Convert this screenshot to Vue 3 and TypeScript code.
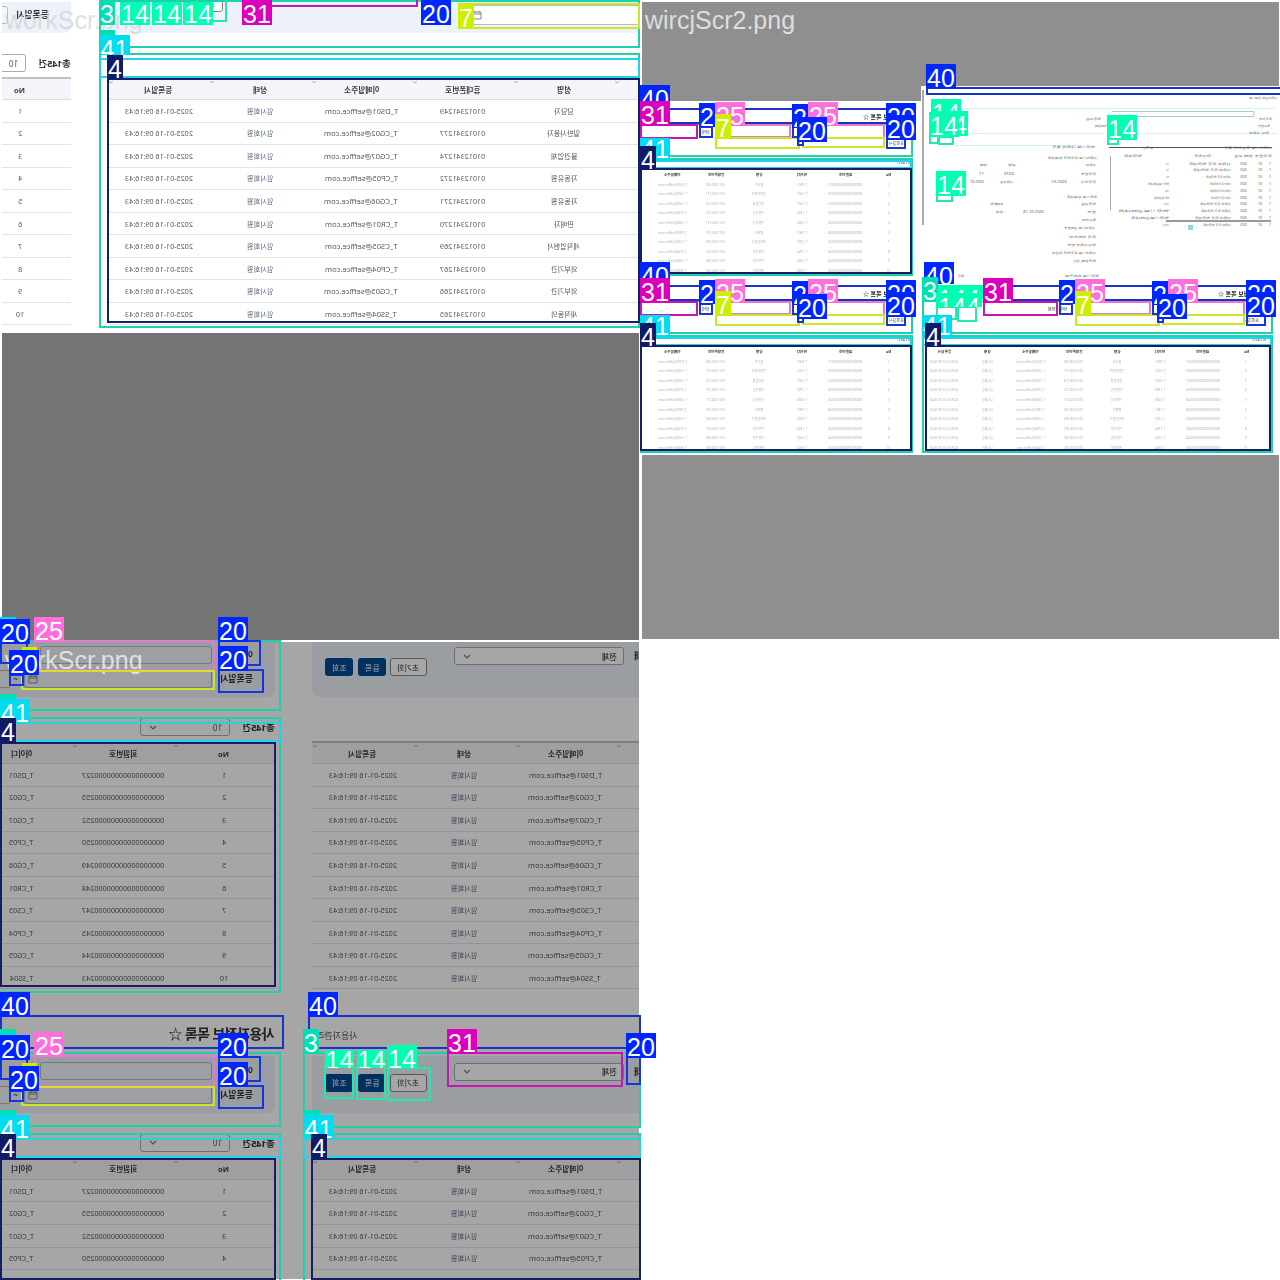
<script setup lang="ts">
interface Row { id: string; no: string; phone: string; name: string }
interface Mark { k: number; x: number; y: number; r: number; b: number }
interface Tag { k: number; x: number; y: number; w?: number; h?: number; t?: string; dy?: number }

const rows: Row[] = [
  ['DS01', '227', '249', '담당자'], ['CG02', '255', '277', '일반사용자'],
  ['CG07', '252', '274', '물건업체'], ['CP05', '250', '272', '자동유원'],
  ['CG06', '249', '271', '자동유원'], ['CR01', '248', '270', '판매자'],
  ['CS05', '247', '269', '세직업현서'], ['CP04', '245', '267', '외부기관'],
  ['CG05', '244', '266', '외부기관'], ['SS04', '243', '265', '새직동의'],
].map(([id, no, phone, name]) => ({ id, no, phone, name }))

const heads: Record<string, string> = {
  no: 'No', member: '회원번호', id: '아이디', date: '등록일시',
  state: '상태', mail: '이메일주소', phone: '휴대폰번호', name: '성명', rest: '',
}
function cell(key: string, r: Row, i: number): string {
  switch (key) {
    case 'no': return String(i + 1)
    case 'member': return '00000000000000000' + r.no
    case 'id': return 'T_' + r.id
    case 'date': return '2025-01-16 09:16:43'
    case 'state': return '임시회원'
    case 'mail': return `T_${r.id}@seffice.com`
    case 'phone': return '01012341' + r.phone
    case 'name': return r.name
    default: return ''
  }
}
const left = ['id', 'member', 'no']
const right = ['date', 'state', 'mail', 'phone', 'name', 'rest']
const pages = [
  { cls: 'light', bands: [{ title: false }] },
  { cls: 'dark', bands: [{ title: false }, { title: true }] },
]

const thumbHeads = ['이메일주소', '휴대폰번호', '성명', '아이디', '회원번호', 'No']
const wideHeads = ['등록일시', '상태', ...thumbHeads]
function thumbCell(head: string, r: Row, i: number): string {
  const key = Object.keys(heads).find(k => heads[k] === head) ?? 'rest'
  return cell(key, r, i)
}

const marks: Mark[] = []
const tags: Tag[] = []
const box = (k: number, x: number, y: number, r: number, b: number) => marks.push({ k, x, y, r, b })
const tag = (k: number, x: number, y: number, w?: number, h?: number, t?: string, dy?: number) =>
  tags.push({ k, x, y, w, h, t, dy })

// upper left page
box(3, 99, 0, 640, 48); box(14, 196, -10, 227, 22); box(31, 242, -10, 418, 7)
box(7, 458, 3, 640, 29); box(3, 99, 53, 640, 328); box(41, 99, 58, 640, 78); box(4, 107, 78, 640, 323)
tag(3, 99, 30, 16, 10, ''); tag(3, 99, 2, 16, 23, '3', -2)
for (const x of [120, 152, 183]) tag(14, x, 2, 30, 23, '14', -2)
tag(31, 242, 0); tag(20, 421, 0); tag(7, 458, 4, 16); tag(41, 99, 35, 31, 20); tag(4, 107, 55, 16, 24)

// lower left page, two repeats of the form
for (const d of [0, 416]) {
  box(3, -2, d ? 1052 : 640, 281, 711 + d)
  box(25, 34, (d ? 639 : 640) + d, 215, 671 + d)
  box(7, 21, 670 + d, 215, 690 + d)
  box(20, 218, 640 + d, 261, 666 + d); box(20, 218, 669 + d, 264, 693 + d)
  box(20, 9, 674 + d, 24, 686 + d); box(20, 0, 640 + d, 28, 664 + d)
  box(3, -2, 717 + d, 281, d ? 1290 : 993); box(41, -2, 722 + d, 281, 742 + d)
  box(4, 0, 742 + d, 276, d ? 1280 : 987)
  tag(d ? 3 : 41, 0, d ? 1029 : 617, 16, 10, ''); tag(3, 0, 694 + d, 16, 10, '')
  tag(7, 22, 647 + d, 15, 4, '')
  tag(20, 0, 619 + d); tag(25, 34, (d ? 616 : 617) + d)
  tag(20, 218, 617 + d); tag(20, 218, 646 + d); tag(20, 9, 650 + d)
  tag(41, 0, 699 + d, 30, 23); tag(4, 0, 718 + d, 16, 25)
}
box(40, 0, 1015, 284, 1049); box(40, 308, 1015, 641, 1049)
box(3, 303, 1052, 641, 1128); box(14, 324, 1066, 354, 1099); box(14, 356, 1066, 386, 1100)
box(14, 387, 1067, 431, 1101); box(31, 447, 1052, 623, 1087); box(20, 626, 1056, 641, 1085)
box(3, 303, 1133, 641, 1290); box(41, 303, 1138, 641, 1158); box(4, 311, 1158, 641, 1280)
tag(40, 0, 992, 30, 25); tag(40, 308, 992)
tag(3, 303, 1029, 16)
tag(14, 325, 1050, 29, 18, '14', -4); tag(14, 357, 1050, 29, 18, '14', -4); tag(14, 387, 1045, 30, 23, '14', 0)
tag(31, 447, 1029); tag(20, 626, 1033); tag(3, 303, 1110, 16, 10, ''); tag(41, 303, 1115, 31, 23); tag(4, 311, 1134, 16)

// thumbnails
function thumb(dx: number, dy: number) {
  const w = dx > 0
  const l = w ? 922 : 640
  box(3, l, 123 + dy, 913 + dx, 157 + dy)
  box(40, w ? 924 : 640, 108 + dy, 915 + dx, 124 + dy)
  box(25, 715 + dx, 124 + dy, 791 + dx, 138 + dy); box(25, 808 + dx, 124 + dy, 885 + dx, 139 + dy)
  box(7, 715 + dx, 137 + dy, 800 + dx, 149 + dy); box(7, 802 + dx, 137 + dy, 885 + dx, 148 + dy)
  box(31, (w ? 623 : 640) + dx, 124 + dy, 698 + dx, 139 + dy)
  box(20, 699 + dx, 126 + dy, 713 + dx, 138 + dy); box(20, 792 + dx, 126 + dy, 800 + dx, 138 + dy)
  box(20, 797 + dx, 139 + dy, 804 + dx, 146 + dy); box(20, 886 + dx, 138 + dy, 906 + dx, 149 + dy)
  box(3, l, 158 + dy, 913 + dx, 276 + dy); box(41, l, 160 + dy, 912 + dx, 169 + dy)
  box(4, w ? 925 : 640, 168 + dy, (w ? 911 : 912) + dx, 274 + dy)
  tag(40, w ? 924 : 640, 85 + dy, 30, w ? 22 : 17)
  if (w) {
    tag(3, 922, 277, 16, 25)
    tag(14, 938, 285, 45, 16, '1444', 0); tag(14, 936, 293, 46, 14, '144', 0)
    box(14, 936, 306, 957, 320); box(14, 957, 306, 977, 322)
  }
  tag(31, (w ? 623 : 640) + dx, 101 + dy)
  tag(20, 699 + dx, 103 + dy, 16, 24, '2'); tag(25, 715 + dx, 102 + dy, 30, 24)
  tag(7, 715 + dx, 114 + dy, 16, 24)
  tag(20, 792 + dx, 104 + dy, 16, 24, '2'); tag(25, 808 + dx, 102 + dy, 30, 24)
  tag(20, 797 + dx, 117 + dy)
  tag(20, 886 + dx, 103 + dy, 30, 14); tag(20, 886 + dx, 115 + dy)
  tag(41, w ? 922 : 640, 138 + dy, 30, 23, '41', -3)
  tag(4, w ? 925 : 640, 146 + dy, 16, 24)
}
thumb(0, 0)
thumb(0, 177)
thumb(360, 177)
box(40, 926, 87, 1282, 95); tag(40, 926, 64, 30, 24)
box(14, 929, 134, 939, 144); box(14, 938, 136, 954, 145); box(14, 936, 192, 953, 202); box(14, 1107, 137, 1119, 145)
tag(14, 931, 99, 30, 16, '14', 0); tag(14, 938, 111, 30, 25); tag(14, 929, 112); tag(14, 936, 171); tag(14, 1107, 115)

const ink: Record<number, string> = {
  3: '#00dfb4', 4: '#101b68', 7: '#ccf000', 14: '#00ffb3', 20: '#0026ff',
  25: '#ff6fdc', 31: '#dc00bc', 40: '#0026ff', 41: '#00dcf0',
}
const line: Record<number, string> = {
  3: '#20cfae', 4: '#141f62', 7: '#cbe629', 14: '#23e8af', 20: '#1437d8',
  25: '#e678cd', 31: '#c418ae', 40: '#1934c5', 41: '#20d3e6',
}

// text of the small detail screen: left, baseline, width, content
type Line = [number, number, number, string]
const detail: Line[] = [
  [328, 13, 28, '사용자관리 상세정보'],
  [165, 34, 15, '업무구분'], [174, 41, 12, '처리상태'], [338, 34, 13, '등록일자'], [337, 41, 12, '접수번호'], [328, 48, 20, '담당 사용자'],
  [131, 62, 43, '업무정보 사용자 목록'], [127, 72.5, 49, '사용자정보 등록업무 상세내용'],
  [165, 80, 10, '사용자'], [87, 80, 8, '성명'], [59, 80, 7, '상태'],
  [160, 88.5, 15, '등록번호'], [83, 88.5, 10, '0270'], [58, 88.5, 5, '11'],
  [160, 96.5, 15, '등록일시'], [79, 96.5, 13, '사용구분'], [130, 96.5, 16, '2025-01'], [49, 96.5, 14, '2025-01'],
  [146, 111.5, 30, '업무정보 상세내용'], [160, 119, 15, '업무구분'], [69, 119, 13, '이메일'],
  [166, 127, 9, '번호'], [75, 127, 7, '전체'], [102, 127, 21, '2025-01-16'],
  [161, 135, 14, '접수처리'], [143, 143, 31, '사용자정보 관리번호'], [148, 151.5, 27, '등록 처리일자'],
  [146, 159.5, 29, '담당사용자 번호'], [131, 167.5, 44, '사용자정보 등록업무 담당자'], [152, 175.5, 23, '업무상태 확인'],
  [144, 191, 34, '업무정보 처리결과'], [37, 191, 6, '목록'],
  [222, 63, 10, '총 10건'], [303, 63, 48, '사용자정보 담당업무 목록'],
  [203, 71, 18, '업무내용'], [273, 71, 17, '담당업무'], [313, 71, 38, '등록번호 상태 구분'],
]
const listLens = [[3, 42], [3, 38], [3, 25], [21, 21], [4, 21], [15, 20], [5, 31], [51, 30], [38, 36], [6, 28]]
listLens.forEach(([a, b], i) => {
  const y = 78.5 + i * 6.82
  detail.push([248 - a, y, a, a > 12 ? '업무정보관리내용' : '가나'])
  detail.push([310 - b, y, b, '사용자 등록 업무내용'])
  detail.push([319, y, 7, '2025'], [337, y, 4, '01'], [348, y, 2, '1'])
})
const px = (n: number) => n + 'px'
</script>

<template>
  <main class="stage">
    <div class="quads">
      <section v-for="p in pages" :key="p.cls" class="page" :class="p.cls">
        <div class="sheet">
          <div v-for="(b, bi) in p.bands" :key="bi" class="band">
            <div v-for="side in ['left', 'right']" :key="side" class="frag" :class="side">
              <div v-if="b.title" class="title">
                <span v-if="side === 'left'" class="m">사용자정보 목록 ☆</span>
                <small v-else class="m">사용자관리</small>
              </div>
              <div class="panel">
                <template v-if="side === 'left'">
                  <div class="line">
                    <b v-if="p.cls === 'dark'" class="m near">성명</b>
                    <i class="input" /><b class="m">아이디</b>
                  </div>
                  <div class="line">
                    <i v-if="p.cls === 'dark'" class="input tail" />
                    <span v-if="p.cls === 'dark'" class="dash">~</span>
                    <i class="input date"><svg viewBox="0 0 10 10"><path d="M1 2h8v7H1zM1 4h8M3 1v2M7 1v2" /></svg></i>
                    <b class="m">등록일시</b>
                  </div>
                </template>
                <template v-else>
                  <div class="buttons">
                    <span class="btn"><em class="m">조회</em></span>
                    <span class="btn"><em class="m">등록</em></span>
                    <span class="btn plain"><em class="m">초기화</em></span>
                  </div>
                  <div class="select wide"><svg viewBox="0 0 8 5"><path d="M1 1l3 3 3-3" /></svg><em class="m">전체</em></div>
                  <div class="more">
                    <b class="m">상태</b>
                    <i class="input date"><svg viewBox="0 0 10 10"><path d="M1 2h8v7H1zM1 4h8M3 1v2M7 1v2" /></svg></i>
                  </div>
                </template>
              </div>
              <div class="tools">
                <template v-if="side === 'left'">
                  <div class="select"><svg viewBox="0 0 8 5"><path d="M1 1l3 3 3-3" /></svg><em class="m">10</em></div>
                  <b class="m total">총145건</b>
                </template>
              </div>
              <div class="table">
                <div class="tr th">
                  <div v-for="c in side === 'left' ? left : right" :key="c" class="td">
                    <svg class="sort" viewBox="0 0 6 4"><path d="M1 1l2 2 2-2" /></svg>
                    <b class="m">{{ heads[c] }}</b>
                  </div>
                </div>
                <div v-for="(r, i) in rows" :key="r.id" class="tr">
                  <div v-for="c in side === 'left' ? left : right" :key="c" class="td" :class="c">
                    <span class="m">{{ cell(c, r, i) }}</span>
                  </div>
                </div>
              </div>
            </div>
          </div>
        </div>
        <span class="wm">workScr.png</span>
      </section>

      <section class="thumbs">
        <div class="cols">
          <div class="col c1">
            <div class="gray g1" />
            <div v-for="n in 2" :key="n" class="mini">
              <div class="mtitle"><b class="m">사용자정보 목록 ☆</b></div>
              <div class="mform"><span class="m">상태</span><span class="m">등록일시</span></div>
              <div class="mtotal"><span class="m">총145건</span></div>
              <div class="mrow mhead"><span v-for="h in thumbHeads" :key="h"><b class="m">{{ h }}</b></span></div>
              <div v-for="(r, i) in rows" :key="i" class="mrow">
                <span v-for="h in thumbHeads" :key="h"><i class="m">{{ thumbCell(h, r, i) }}</i></span>
              </div>
            </div>
          </div>
          <div class="col c2">
            <div class="gray g2" />
            <svg class="detail" width="358" height="192" viewBox="0 0 358 192">
              <rect x="1" y="4" width="2" height="135" fill="#aaa" />
              <path d="M30 22.5H353M20 47.5H184M188 47.5H355M34 59.5H160" stroke="#d2f3f0" />
              <path d="M191 25.5H333V30.5H193" fill="none" stroke="#9fcfca" />
              <path d="M188 61.5H351" stroke="#555" />
              <path d="M189.5 70V124" stroke="#aaa" /><path d="M245 135H350" stroke="#999" stroke-width="2" />
              <rect x="267" y="139" width="5" height="5" fill="#8fd8d8" />
              <path d="M264 140l-1 1.500 1 1.500M275 140l1 1.500-1 1.500" fill="none" stroke="#aadede" stroke-width=".5" />
              <text
                v-for="(t, i) in detail" :key="i" :transform="`translate(${t[0] + t[2]} ${t[1]}) scale(-1 1)`"
                :textLength="t[2]" lengthAdjust="spacingAndGlyphs"
              >{{ t[3] }}</text>
            </svg>
            <div class="mini widem">
              <div class="mtitle"><b class="m">사용자정보 목록 ☆</b></div>
              <div class="mform"><em class="m">전체</em><span class="m">상태</span><span class="m">등록일시</span></div>
              <div class="mtotal"><span class="m">총145건</span></div>
              <div class="mrow mhead"><span v-for="h in wideHeads" :key="h"><b class="m">{{ h }}</b></span></div>
              <div v-for="(r, i) in rows" :key="i" class="mrow">
                <span v-for="h in wideHeads" :key="h"><i class="m">{{ thumbCell(h, r, i) }}</i></span>
              </div>
            </div>
          </div>
        </div>
        <div class="gray g3" />
        <span class="wm">wircjScr2.png</span>
      </section>
      <section class="empty" />
    </div>

    <div
      v-for="(m, i) in marks" :key="'m' + i" class="mark"
      :style="{ left: px(m.x), top: px(m.y), width: px(m.r - m.x), height: px(m.b - m.y), borderColor: line[m.k] }"
    />
    <div
      v-for="(t, i) in tags" :key="'t' + i" class="tag"
      :style="{ left: px(t.x), top: px(t.y), width: px(t.w ?? 30), height: px(t.h ?? 25), background: ink[t.k] }"
    ><span :style="{ marginTop: px(t.dy ?? 0) }">{{ t.t ?? t.k }}</span></div>
  </main>
</template>

<style>
body { margin: 0; background: #fff; }
</style>

<style scoped>
* { box-sizing: border-box; }
.stage { position: relative; width: 1280px; height: 1280px; overflow: hidden; background: #fff; font-family: "Noto Sans", "Noto Sans CJK KR", sans-serif; }
.quads { display: grid; grid-template-columns: 640px 640px; grid-template-rows: 640px 640px; }
.m { display: inline-block; transform: scaleX(-1); font-style: normal; white-space: nowrap; }
.page { position: relative; overflow: hidden; border: solid #fff; border-width: 2px 1px 0 2px; background: #747474; }
.page.dark { grid-row: 2; grid-column: 1; border-left-width: 0; border-bottom: 1px solid #fff; }
.page.light { grid-row: 1; grid-column: 1; }
.thumbs { grid-row: 1; grid-column: 2; position: relative; padding: 2px 1px 1px 2px; overflow: hidden; }
.empty { grid-row: 2; grid-column: 2; background: #fff; }
.sheet { background: #fff; }
.light .sheet { margin-top: -26px; height: 357px; }
.dark .sheet { margin-top: -2px; height: 642px; filter: brightness(.65); }
.light .band { margin-left: -206px; width: 843px; }
.band { display: flex; gap: 37.4px; }
.frag { overflow: hidden; flex: none; }
.frag.left { width: 274.600px; }
.frag.right { width: 533px; }
.title { height: 66.400px; padding-top: 35px; display: flex; font-size: 14px; font-weight: 700; line-height: 20px; color: #333; }
.left .title { justify-content: flex-end; letter-spacing: -.6px; }
.title small { font-size: 9px; font-weight: 400; margin-left: 4px; padding-top: 2px; color: #555; }
.panel { height: 57px; background: #edf1f9; overflow: hidden; border-radius: 0 0 7px 7px; font-size: 9px; color: #333; }
.left .panel { display: flex; flex-direction: column; padding: 5px 22px 0 0; gap: 4px; border-radius: 0 0 7px 0; }
.line { display: flex; justify-content: flex-end; align-items: center; height: 20px; gap: 10px; }
.line > * { flex: none; }
.line b { width: 31px; text-align: left; line-height: 12px; }
.line b.near { margin-right: -5px; }
.line .tail { width: 60px; margin-right: -9px; }
.dash { width: 8px; margin-right: -6px; line-height: 12px; text-align: center; }
.input { width: 172px; height: 18px; border: 1px solid #b5b9c2; border-radius: 3px; background: #fff; }
.line .input { background: #f3f5fa; }
.input.date { width: 188px; display: flex; align-items: center; padding-left: 3px; }
.input svg { width: 10px; height: 10px; fill: none; stroke: #888; stroke-width: 1; }
.right .panel { display: flex; padding-left: 13px; align-items: flex-start; border-radius: 0 0 0 7px; }
.buttons { display: flex; gap: 5px; padding-top: 18px; }
.btn { width: 28px; height: 18px; border-radius: 3px; background: #004a92; color: #fff; display: grid; place-items: center; font-size: 8px; }
.btn.plain { width: 37px; border: 1px solid #888; background: #fff; color: #444; margin-left: -1px; }
.select { width: 90px; height: 18px; border: 1px solid #aaa; border-radius: 3px; background: #fff; display: flex; align-items: center; justify-content: space-between; padding: 0 6px 0 8px; font-size: 8px; color: #555; }
.select svg { width: 8px; height: 5px; fill: none; stroke: #777; stroke-width: 1.200; }
.select.wide { width: 170px; margin: 7px 0 0 27px; flex: none; font-weight: 600; }
.more { display: flex; flex-direction: column; gap: 6px; padding: 10px 0 0 10px; }
.more b { line-height: 12px; align-self: flex-start; }
.more .input { width: 190px; margin-left: 38px; margin-top: 1px; height: 20px; }
.tools { height: 44px; display: flex; justify-content: flex-end; padding-top: 21px; gap: 11px; }
.total { font-size: 9.500px; line-height: 19px; color: #333; letter-spacing: -.4px; }
.tools .select { margin-right: auto; margin-left: 139.500px; }
.table { border-top: 2px solid #c0c2c8; }
.tr { display: flex; height: 22.560px; border-bottom: 1px solid #e3e3e6; }
.left .tr { justify-content: flex-end; }
.tr.th { height: 21px; background: #f4f5fa; border-color: #dcdde2; }
.td { position: relative; flex: none; width: 101.300px; display: flex; align-items: center; justify-content: center; font-size: 7.200px; color: #585858; }
.td .m { line-height: 10px; }
.td.state { color: #586a80; }
.td.mail .m { font-size: 7.600px; }
.th .td { font-size: 7.700px; color: #3c3c3c; padding-top: 1px; }
.sort { position: absolute; left: 0; top: 1px; width: 6px; height: 4px; fill: none; stroke: #aaa; stroke-width: .9; }
.wm { position: absolute; left: 3px; top: 3px; font: 25px/30px "Liberation Sans", Arial, sans-serif; color: rgba(205, 205, 205, .65); }
.dark .wm { left: 5px; color: rgba(255, 255, 255, .7); }
.thumbs .wm { left: 5px; top: 5px; color: #dedede; }
.cols { display: flex; height: 453px; }
.c1 { width: 280px; }
.c2 { width: 358px; }
.gray { background: #8f8f8f; }
.g1 { height: 99px; }
.g2 { height: 84px; }
.g3 { height: 184px; }
.detail { display: block; }
.detail text { font-size: 2.600px; fill: #555; }
.mini { height: 177px; width: 269px; overflow: hidden; color: #777; font-size: 3px; line-height: 4px; }
.mtitle { height: 27px; padding-top: 13px; text-align: right; font-size: 6px; line-height: 7px; color: #222; }
.mform { height: 31px; display: flex; gap: 5px; padding: 2px 7px 0 60px; font-size: 4px; line-height: 5px; color: #333; }
.mform span:last-child { margin-left: auto; padding-top: 11px; }
.mtotal { height: 10px; text-align: right; padding-top: 2px; font-size: 4px; color: #444; }
.mrow { display: grid; height: 9.550px; align-items: center; text-align: center; opacity: .6; justify-content: start; grid-template-columns: repeat(6, 43.200px); padding-left: 9px; }
.mrow > span { display: flex; justify-content: center; }
.mhead { opacity: 1; height: 11px; font-size: 3.600px; color: #333; }
.widem { width: 345px; }
.widem .mrow { grid-template-columns: repeat(8, 43.100px); padding-left: 2px; }
.widem .mform { padding-left: 127px; }
.mark { position: absolute; border: 2px solid; }
.tag { position: absolute; overflow: hidden; color: #fff; font: 25px/28px "Liberation Sans", Arial, sans-serif; text-align: center; }
.tag span { display: block; white-space: nowrap; }
</style>
